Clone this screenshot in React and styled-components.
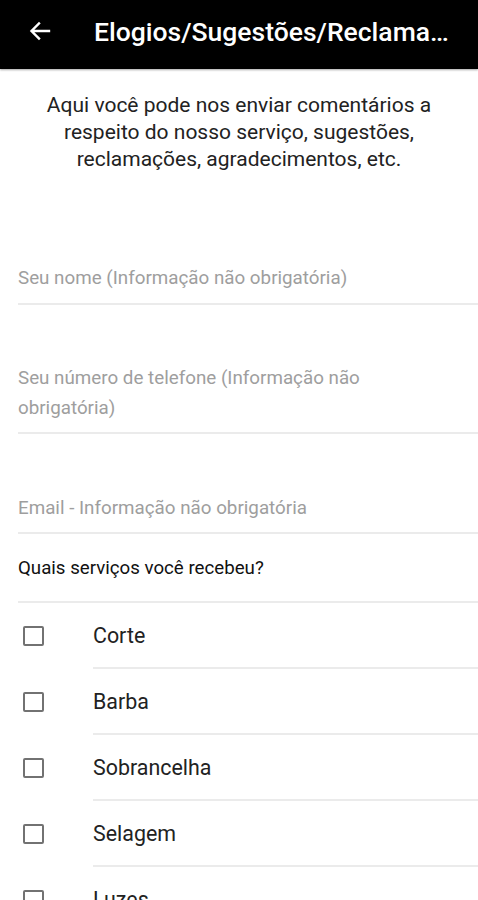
import React from "react";
import styled, { createGlobalStyle } from "styled-components";

const Global = createGlobalStyle`
  html, body { margin: 0; padding: 0; background: #fff; }
  body { font-family: Roboto, "Noto Sans", Arial, sans-serif; }
  * { box-sizing: border-box; }
`;

const Page = styled.div`
  width: 478px;
  height: 900px;
  overflow: hidden;
  background: #fff;
`;

const AppBar = styled.header`
  height: 69px;
  background: #000;
  display: flex;
  align-items: center;
  padding: 0 0 7px 28px;
  box-shadow: 0 1px 2px rgba(0,0,0,0.35);
`;

const BackButton = styled.div`
  width: 24px;
  height: 24px;
  display: flex;
  align-items: center;
  justify-content: center;
  margin-right: 42px;
`;

const Title = styled.h1`
  margin: 0;
  color: #fff;
  font-family: Roboto, sans-serif;
  font-weight: 500;
  font-size: 26.5px;
  white-space: nowrap;
  overflow: hidden;
  text-overflow: ellipsis;
  flex: 1;
  padding-right: 16px;
`;

const Intro = styled.p`
  margin: 23px 0 0;
  padding: 0 30px;
  text-align: center;
  font-size: 21px;
  line-height: 27px;
  color: #222;
`;

const Form = styled.div`
  margin-top: 90px;
  padding-left: 18px;
`;

const Field = styled.div`
  border-bottom: 2px solid #ebebeb;
  padding: ${p => p.$top}px 0 ${p => p.$bottom}px;
`;

const Placeholder = styled.div`
  font-size: 18.8px;
  line-height: 30px;
  color: #9e9e9e;
  padding-right: ${p => p.$pr || 0}px;
`;

const Question = styled.div`
  border-bottom: 2px solid #ebebeb;
  font-size: 18.7px;
  line-height: 22px;
  color: #111;
  padding: 23px 0 22px;
`;

const List = styled.ul`
  list-style: none;
  margin: 0;
  padding: 0;
`;

const Row = styled.li`
  display: flex;
  align-items: stretch;
  height: 66px;
`;

const BoxCell = styled.div`
  width: 93px;
  display: flex;
  align-items: center;
  padding-left: 23px;
`;

const Box = styled.span`
  width: 21px;
  height: 20px;
  border: 2px solid #727272;
  border-radius: 2px;
  display: block;
`;

const Label = styled.div`
  flex: 1;
  display: flex;
  align-items: center;
  font-size: 21.4px;
  color: #222;
  border-bottom: 2px solid #ebebeb;
`;

const services = ["Corte", "Barba", "Sobrancelha", "Selagem", "Luzes"];

export default function App() {
  return (
    <Page>
      <Global />
      <AppBar>
        <BackButton>
          <svg width="24" height="24" viewBox="0 0 24 24" fill="none" stroke="#fff" strokeWidth="2.4" strokeLinecap="square">
            <path d="M21 12H4M11 4.5L3.5 12L11 19.5" />
          </svg>
        </BackButton>
        <Title>Elogios/Sugestões/Reclamações</Title>
      </AppBar>
      <Intro>
        Aqui você pode nos enviar comentários a respeito do nosso serviço, sugestões, reclamações, agradecimentos, etc.
      </Intro>
      <Form>
        <Field $top={0} $bottom={10}>
          <Placeholder $pr={120}>Seu nome (Informação não obrigatória)</Placeholder>
        </Field>
        <Field $top={58} $bottom={9}>
          <Placeholder $pr={100}>Seu número de telefone (Informação não obrigatória)</Placeholder>
        </Field>
        <Field $top={59} $bottom={9}>
          <Placeholder>Email - Informação não obrigatória</Placeholder>
        </Field>
        <Question>Quais serviços você recebeu?</Question>
      </Form>
      <List>
        {services.map(s => (
          <Row key={s}>
            <BoxCell><Box /></BoxCell>
            <Label>{s}</Label>
          </Row>
        ))}
      </List>
    </Page>
  );
}
